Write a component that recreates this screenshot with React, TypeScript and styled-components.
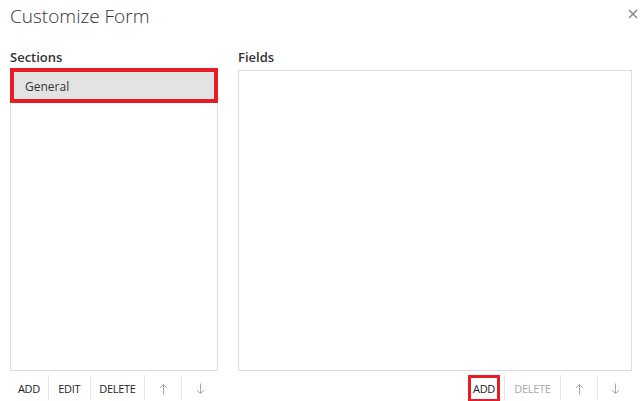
import styled, { createGlobalStyle } from 'styled-components'

const GlobalStyle = createGlobalStyle`
    html, body {
        margin: 0;
        padding: 0;
        background: #ffffff;
    }
    body {
        font-family: "Open Sans", "Noto Sans", "Liberation Sans", sans-serif;
        color: #333333;
    }
`

const Dialog = styled.div`
    width: 642px;
    height: 401px;
    box-sizing: border-box;
    padding: 0 10px;
    display: flex;
    flex-direction: column;
    overflow: hidden;
`

const Header = styled.div`
    display: flex;
    justify-content: space-between;
    align-items: flex-start;
    height: 44px;
`

const Title = styled.h1`
    margin: 3px 0 0 0;
    font-size: 19px;
    font-weight: 300;
    line-height: 26px;
    color: #333;
`

const CloseButton = styled.button`
    border: none;
    background: none;
    padding: 0;
    margin: 8px -7px 0 0;
    width: 12px;
    height: 12px;
    display: flex;
    align-items: center;
    justify-content: center;
    cursor: pointer;
`

const Columns = styled.div`
    display: grid;
    grid-template-columns: 208px 394px;
    column-gap: 20px;
`

const Column = styled.div`
    display: flex;
    flex-direction: column;
`

const Label = styled.div`
    font-size: 13px;
    font-weight: 600;
    line-height: 18px;
    height: 26px;
    box-sizing: border-box;
    padding-top: 4px;
    color: #333;
`

const ListBox = styled.div`
    height: 301px;
    box-sizing: border-box;
    border: 1px solid #dcdcdc;
    padding: 0;
`

const ListItem = styled.div<{ $marked?: boolean }>`
    margin: 1px 3px 0 3px;
    height: 27px;
    box-sizing: border-box;
    padding: 2px 0 0 11px;
    display: flex;
    align-items: center;
    font-size: 12px;
    color: #333;
    background: ${p => (p.$marked ? '#e3e3e3' : 'transparent')};
    outline: ${p => (p.$marked ? '4px solid #e81c24' : 'none')};
`

const Toolbar = styled.div<{ $right?: boolean }>`
    display: flex;
    justify-content: ${p => (p.$right ? 'flex-end' : 'flex-start')};
    height: 29px;
    padding-top: 4px;
    box-sizing: border-box;
`

const ToolButton = styled.button<{ $disabled?: boolean; $first?: boolean; $w: number }>`
    border: none;
    background: none;
    border-left: ${p => (p.$first ? 'none' : '1px solid #e6e6e6')};
    width: ${p => p.$w}px;
    height: 25px;
    padding: 2px 0 0 0;
    box-sizing: border-box;
    font-family: "Open Sans", "Noto Sans", "Liberation Sans", sans-serif;
    font-size: 11px;
    letter-spacing: -0.3px;
    color: ${p => (p.$disabled ? '#a8a8a8' : '#222')};
    display: flex;
    align-items: center;
    justify-content: center;
    cursor: pointer;
`

const Marked = styled.span`
    outline: 3px solid #e81c24;
    outline-offset: 0;
    padding: 4px 2px 3px 2px;
    line-height: 14px;
`

const Arrow = ({ down, color }: { down?: boolean; color: string }) => (
    <svg width="9" height="12" viewBox="0 0 9 12" style={{ transform: down ? 'rotate(180deg)' : undefined }}>
        <path d="M4.5 1.5 V11.5 M1 5 L4.5 1.5 L8 5" fill="none" stroke={color} strokeWidth="1" />
    </svg>
)

const App = () => {
    return (
        <>
            <GlobalStyle />
            <Dialog>
                <Header>
                    <Title>Customize Form</Title>
                    <CloseButton aria-label="close">
                        <svg width="10" height="10" viewBox="0 0 10 10">
                            <path d="M1 1 L9 9 M9 1 L1 9" stroke="#8a8a8a" strokeWidth="1.5" />
                        </svg>
                    </CloseButton>
                </Header>
                <Columns>
                    <Column>
                        <Label>Sections</Label>
                        <ListBox>
                            <ListItem $marked>General</ListItem>
                        </ListBox>
                        <Toolbar>
                            <ToolButton $first $w={38}>ADD</ToolButton>
                            <ToolButton $w={42}>EDIT</ToolButton>
                            <ToolButton $w={55}>DELETE</ToolButton>
                            <ToolButton $w={37}><Arrow color="#a8a8a8" /></ToolButton>
                            <ToolButton $w={37}><Arrow down color="#a8a8a8" /></ToolButton>
                        </Toolbar>
                    </Column>
                    <Column>
                        <Label>Fields</Label>
                        <ListBox />
                        <Toolbar $right>
                            <ToolButton $first $w={40}><Marked>ADD</Marked></ToolButton>
                            <ToolButton $disabled $w={56}>DELETE</ToolButton>
                            <ToolButton $w={37}><Arrow color="#a8a8a8" /></ToolButton>
                            <ToolButton $w={35}><Arrow down color="#a8a8a8" /></ToolButton>
                        </Toolbar>
                    </Column>
                </Columns>
            </Dialog>
        </>
    )
}

export default App
